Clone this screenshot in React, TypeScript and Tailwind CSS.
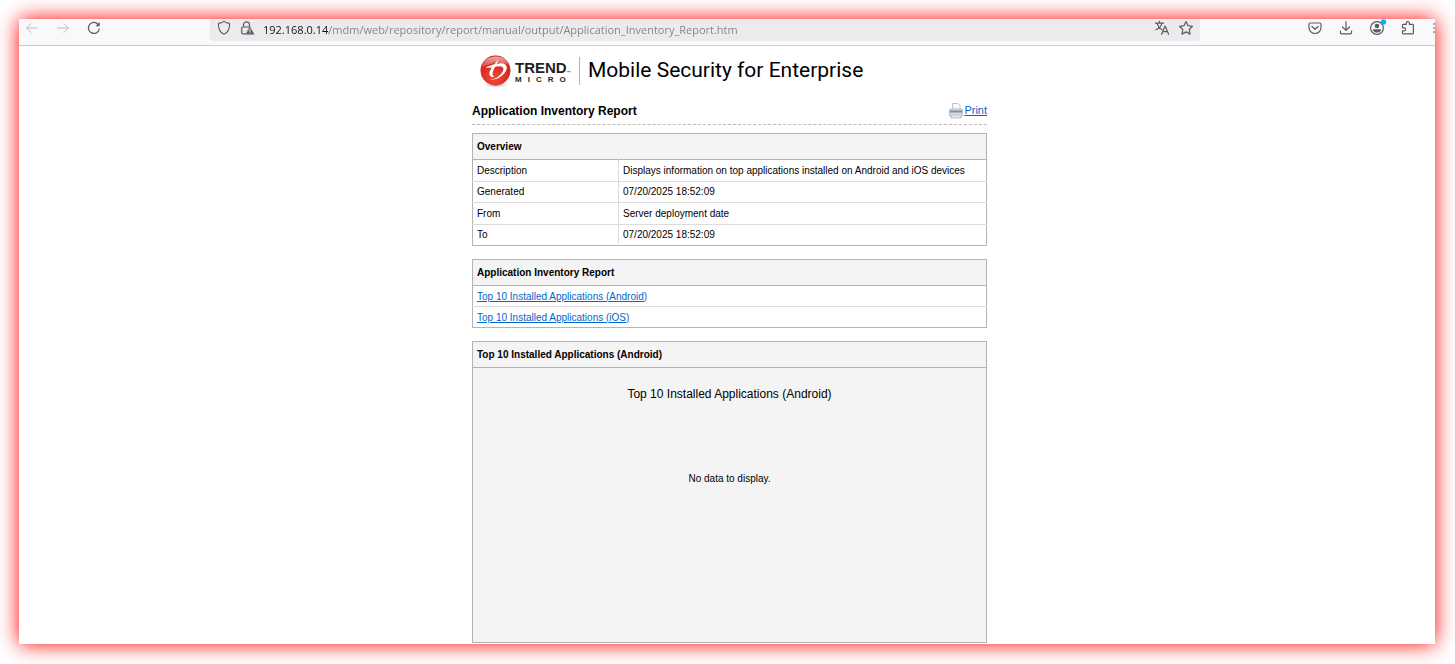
import React, { useState } from "react";

const overview = [
  {
    label: "Description",
    value:
      "Displays information on top applications installed on Android and iOS devices",
  },
  { label: "Generated", value: "07/20/2025 18:52:09" },
  { label: "From", value: "Server deployment date" },
  { label: "To", value: "07/20/2025 18:52:09" },
];

const sections = [
  { id: "android", title: "Top 10 Installed Applications (Android)" },
  { id: "ios", title: "Top 10 Installed Applications (iOS)" },
];

function Icon({ children, className = "" }: any) {
  return (
    <svg
      viewBox="0 0 16 16"
      fill="none"
      stroke="currentColor"
      strokeLinecap="round"
      strokeLinejoin="round"
      className={`block size-4 shrink-0 ${className}`}
    >
      {children}
    </svg>
  );
}

function Toolbar() {
  const [url, setUrl] = useState(
    "192.168.0.14/mdm/web/repository/report/manual/output/Application_Inventory_Report.htm"
  );

  return (
    <header className="flex h-[27px] items-start border-b border-[#cccccf] bg-[#f9f9fb] text-[#5b5b66]">
      <nav className="flex h-[18px] shrink-0 items-center gap-[15px] pl-[5px]">
        <button type="button" aria-label="Back" className="text-[#bcbcc2]">
          <Icon>
            <path d="M13.5 8H2.8M7 3.6L2.6 8 7 12.4" />
          </Icon>
        </button>
        <button type="button" aria-label="Forward" className="text-[#bcbcc2]">
          <Icon>
            <path d="M2.5 8h10.7M9 3.6L13.4 8 9 12.4" />
          </Icon>
        </button>
        <button type="button" aria-label="Reload">
          <Icon>
            <path d="M13.3 9.2A5.5 5.5 0 1 1 12 4.2" strokeWidth="1.2" />
            <path d="M13.6 2v4.2H9.4z" fill="currentColor" stroke="none" />
          </Icon>
        </button>
      </nav>

      {/* Address bar */}
      <div className="ml-[108px] flex h-[22px] min-w-0 flex-1 items-center rounded-b bg-[#ebebed] px-1.5 pb-1">
        <Icon>
          <path
            d="M8 1.4c1.7 1.3 3.4 1.9 5.6 2C13.8 8.3 12.3 12.2 8 14.3 3.7 12.2 2.2 8.3 2.4 3.4 4.6 3.3 6.3 2.7 8 1.4z"
            strokeWidth="1.1"
          />
        </Icon>
        <Icon className="ml-[7px]">
          <path
            d="M4.5 7V4.8a3 3 0 0 1 6 0V7M6 13.8H4a1.3 1.3 0 0 1-1.3-1.3V8.3A1.3 1.3 0 0 1 4 7h6"
            strokeWidth="1.2"
          />
          <path d="M11 7.2l4 7H7z" fill="currentColor" strokeWidth="0.6" />
          <path d="M11 9.5v2.2M11 13v.2" stroke="#ebebed" strokeWidth="1" />
        </Icon>
        <input
          type="text"
          aria-label="Address"
          value={url}
          onChange={(e) => setUrl(e.target.value)}
          spellCheck={false}
          className="ml-2 h-5 min-w-0 flex-1 bg-[linear-gradient(90deg,#15141a_66px,#808087_66px)] bg-clip-text pt-0.5 font-['Open_Sans',sans-serif] text-[11px] text-transparent outline-none"
        />
        <button type="button" aria-label="Translate page">
          <Icon>
            <path
              d="M1.5 3.2h8M5.5 1.4v1.8M8 3.2C7.3 6 5 8.5 1.9 9.8M3 3.4c.8 2.8 2.6 5 4.8 6.2M7.6 14.3L11.1 6l3.5 8.3M8.7 11.6h4.9"
              strokeWidth="1.2"
            />
          </Icon>
        </button>
        <button type="button" aria-label="Bookmark page" className="ml-2">
          <Icon>
            <path
              d="M8 1.5l2 4.2 4.5.6-3.3 3.2.8 4.6L8 11.9 4 14.1l.8-4.6L1.5 6.3 6 5.7z"
              strokeWidth="1.2"
            />
          </Icon>
        </button>
      </div>

      <div className="flex h-[18px] w-[235px] shrink-0 items-center gap-[15px] pl-[107px]">
        <button type="button" aria-label="Save to Pocket">
          <Icon>
            <path
              d="M3.2 3h9.6c.7 0 1.2.5 1.2 1.2V7.5a6 6 0 0 1-12 0V4.2C2 3.5 2.5 3 3.2 3z"
              strokeWidth="1.2"
            />
            <path d="M5 6.5l3 2.8 3-2.8" strokeWidth="1.2" />
          </Icon>
        </button>
        <button type="button" aria-label="Downloads">
          <Icon>
            <path
              d="M8 1.7v8.5M4.5 7L8 10.4 11.5 7M2.4 11.2v1.3c0 .8.6 1.4 1.4 1.4h8.4c.8 0 1.4-.6 1.4-1.4v-1.3"
              strokeWidth="1.2"
            />
          </Icon>
        </button>
        <button type="button" aria-label="Account">
          <Icon className="overflow-visible">
            <circle cx="8" cy="8" r="6.4" strokeWidth="1.2" />
            <circle cx="8" cy="6" r="2.3" fill="currentColor" stroke="none" />
            <path
              d="M3.8 9.2h8.4C11.8 11.4 10.2 12.6 8 12.6S4.2 11.4 3.8 9.2z"
              fill="currentColor"
              stroke="none"
            />
            <circle cx="14.5" cy="2" r="2.7" fill="#00b3f4" stroke="none" />
          </Icon>
        </button>
        <button type="button" aria-label="Extensions">
          <Icon>
            <path
              d="M6.2 4.4V3.2a1.6 1.6 0 0 1 3.2 0v1.2h3.1c.5 0 .9.4.9.9v7.7c0 .5-.4.9-.9.9H3.4a.9.9 0 0 1-.9-.9v-2.2h1.7a1.5 1.5 0 0 0 0-3H2.5V5.3c0-.5.4-.9.9-.9z"
              strokeWidth="1.2"
            />
          </Icon>
        </button>
        <button type="button" aria-label="Menu">
          <Icon>
            <path d="M2.5 4h11M2.5 8h11M2.5 12h11" strokeWidth="1.2" />
          </Icon>
        </button>
      </div>
    </header>
  );
}

function Brand() {
  return (
    <div className="flex h-[34px] items-center pl-2">
      <svg viewBox="0 0 34 34" className="block size-[34px] shrink-0">
        <defs>
          <radialGradient id="ball" cx="0.45" cy="0.75" r="0.75">
            <stop offset="0" stopColor="#f04a3a" />
            <stop offset="0.55" stopColor="#de2f28" />
            <stop offset="1" stopColor="#c8201f" />
          </radialGradient>
          <linearGradient id="shine" x1="0" y1="0" x2="0" y2="1">
            <stop offset="0" stopColor="#fff" stopOpacity="0.6" />
            <stop offset="1" stopColor="#fff" stopOpacity="0.15" />
          </linearGradient>
          <radialGradient id="floor">
            <stop offset="0" stopColor="#777" stopOpacity="0.7" />
            <stop offset="1" stopColor="#999" stopOpacity="0" />
          </radialGradient>
        </defs>
        <ellipse cx="16" cy="31" rx="12" ry="2.5" fill="url(#floor)" />
        <circle cx="15.5" cy="16.5" r="15" fill="url(#ball)" />
        <path
          d="M2.5 13C3 6 9 2.5 15.5 2.5S26.5 5 28.5 11C20 7 11 9 2.5 13z"
          fill="url(#shine)"
        />
        {/* white swirl crossed by the slanted stem */}
        <path
          d="M5.5 13.5C10 11.5 15 9.2 21 9.2c7.500 0 7.500 7 1.500 12-4 3.300-9 5.300-12.500 4 5 0 8-2 10.800-5 3.700-4 3.700-8-1.300-8C15 12.200 10.500 14.800 5.500 13.500z"
          fill="#fff"
        />
        <path
          d="M18.500 5c-1 4.500-3.500 7.500-5 11-1.300 3-1.500 5.500.8 6.800-3 1-5.300-.8-4.800-3.800C10.200 14.500 15.500 9.500 18.500 5z"
          fill="#fff"
        />
      </svg>
      <div className="w-[65px] pt-0.5 pl-px font-['Liberation_Sans',Arial,sans-serif] font-bold text-[#231f20]">
        <div className="flex items-end text-[15px] leading-4">
          TREND
          <span className="text-[4px] leading-[6px]">™</span>
        </div>
        <div className="text-[8px] leading-2 tracking-[6px]">MICRO</div>
      </div>
      <h1 className="flex h-7 items-center border-l border-[#b3b3b3] pl-2 font-['Roboto',sans-serif] text-[21px] text-black">
        Mobile Security for Enterprise
      </h1>
    </div>
  );
}

function PrinterIcon() {
  return (
    <svg viewBox="0 0 14 16" className="block h-4 w-3.5">
      <path d="M3.5.5h5.5l2 2v5h-7.5z" fill="#fafafa" stroke="#c0c0c0" />
      <path
        d="M1.8 6h10.4c.8 0 1.3.6 1.3 1.3v5c0 .6-.4 1-1 1h-11c-.6 0-1-.4-1-1v-5C.5 6.6 1 6 1.8 6z"
        fill="#d9d9d9"
        stroke="#bcbcbc"
      />
      <path d="M1 7.5h12v2H1z" fill="#6d92bf" />
      <path d="M2.5 12h9l.7 3H1.8z" fill="#e6e6e6" stroke="#c4c4c4" />
    </svg>
  );
}

export default function App() {
  return (
    <div className="min-h-screen bg-white px-5 pt-[19px] pb-5 pl-[19px]">
      <div className="overflow-hidden bg-white shadow-[0_0_20px_#ff0000]">
        <Toolbar />
        <main className="flex justify-center pt-2 pb-px pl-[5px] font-['Liberation_Sans',Arial,sans-serif] text-[10px] text-black">
          <div className="w-[515px]">
            <Brand />

            <div className="mt-[13px] flex h-6 items-center justify-between border-b border-dashed border-[#bbb] pb-1">
              <h2 className="text-xs font-bold">Application Inventory Report</h2>
              <a
                href="#print"
                className="flex items-center gap-px text-[11px] text-[#0066cc]"
              >
                <PrinterIcon />
                <span className="underline">Print</span>
              </a>
            </div>

            {/* Overview */}
            <table className="mt-2 h-[113px] w-full border-collapse border border-[#b3b3b3] text-left">
              <thead>
                <tr className="h-[26px] border-b border-[#b3b3b3] bg-[#f4f4f4]">
                  <th colSpan={2} className="px-1 font-bold">
                    Overview
                  </th>
                </tr>
              </thead>
              <tbody>
                {overview.map((row) => (
                  <tr
                    key={row.label}
                    className="border-b border-[#dcdcdc] last:border-[#b3b3b3]"
                  >
                    <th
                      scope="row"
                      className="w-[146px] border-r border-[#dcdcdc] px-1 font-normal"
                    >
                      {row.label}
                    </th>
                    <td className="px-1">{row.value}</td>
                  </tr>
                ))}
              </tbody>
            </table>

            {/* Contents */}
            <table className="mt-[13px] h-[69px] w-full border-collapse border border-[#b3b3b3] text-left">
              <thead>
                <tr className="h-[26px] border-b border-[#b3b3b3] bg-[#f4f4f4]">
                  <th className="px-1 font-bold">Application Inventory Report</th>
                </tr>
              </thead>
              <tbody>
                {sections.map((section) => (
                  <tr
                    key={section.id}
                    className="border-b border-[#dcdcdc] last:border-[#b3b3b3]"
                  >
                    <td className="px-1">
                      <a
                        href={`#${section.id}`}
                        className="text-[#0066cc] underline"
                      >
                        {section.title}
                      </a>
                    </td>
                  </tr>
                ))}
              </tbody>
            </table>

            {/* Android chart */}
            <section
              id="android"
              className="mt-[13px] border border-[#b3b3b3] bg-[#f4f4f4]"
            >
              <h3 className="flex h-[26px] items-center border-b border-[#b3b3b3] px-1 font-bold">
                Top 10 Installed Applications (Android)
              </h3>
              <div className="h-[274px] pt-[18px] text-center">
                <p className="text-xs">Top 10 Installed Applications (Android)</p>
                <p className="mt-[69px]">No data to display.</p>
              </div>
            </section>
          </div>
        </main>
      </div>
    </div>
  );
}
